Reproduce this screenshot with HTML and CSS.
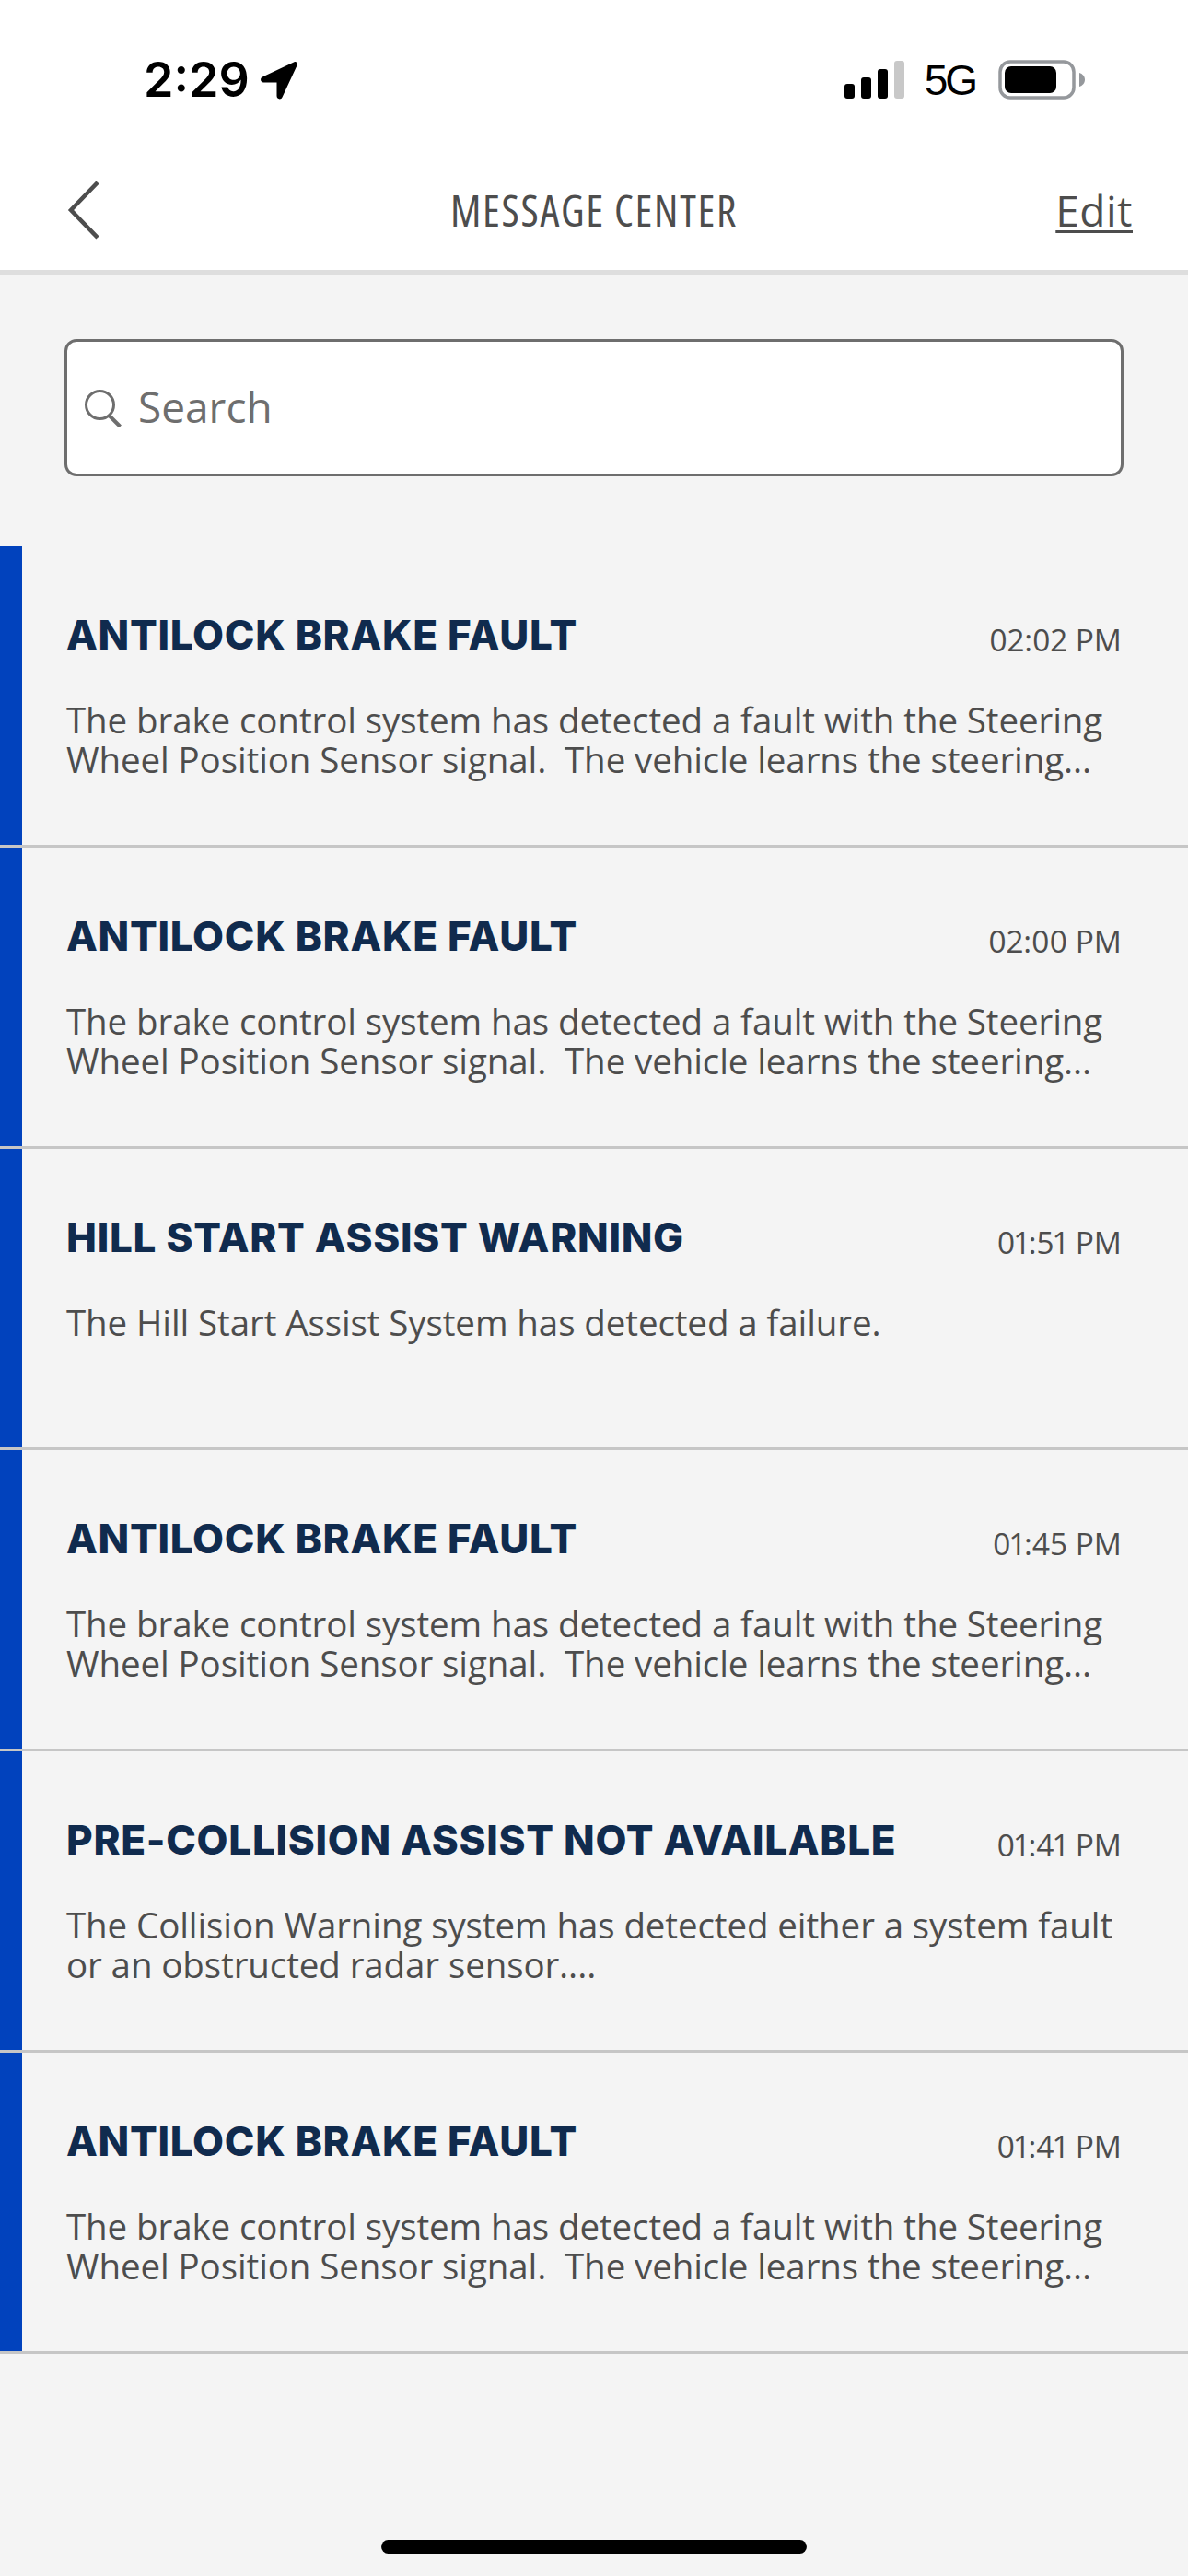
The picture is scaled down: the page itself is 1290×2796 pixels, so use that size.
FILE: index.html
```html
<!DOCTYPE html>
<html lang="en">
<head>
<meta charset="utf-8">
<title>Message Center</title>
<link rel="stylesheet" href="styles.css">
</head>
<body>
<header class="top">
  <div class="status">
    <div class="status-left">
      <span class="clock">2:29</span>
      <svg class="loc" viewBox="0 0 42 42" width="42" height="42"><path d="M37.500 1.200 3 17.500c-3.200 1.600-2.200 6 1.300 6H18.500v14.600c0 3.700 4.800 4.600 6.100 1.100L40.800 4.600c.7-2.300-1.300-4.300-3.300-3.400Z" fill="#000"/></svg>
    </div>
    <div class="status-right">
      <svg class="bars" viewBox="0 0 65 41" width="65" height="41">
        <rect x="0" y="25" width="11" height="16" rx="3" fill="#000"/>
        <rect x="18" y="18" width="11" height="23" rx="3" fill="#000"/>
        <rect x="36" y="9" width="11" height="32" rx="3" fill="#000"/>
        <rect x="54" y="0" width="11" height="41" rx="3" fill="#c8c8c8"/>
      </svg>
      <span class="net">5G</span>
      <svg class="batt" viewBox="0 0 94 43" width="94" height="43">
        <rect x="2" y="2" width="80" height="39" rx="11" fill="none" stroke="#95989c" stroke-width="3.500"/>
        <rect x="7" y="7" width="56" height="29" rx="7" fill="#000"/>
        <path d="M88 14c3.500 1 6 4 6 7.500s-2.500 6.500-6 7.500Z" fill="#95989c"/>
      </svg>
    </div>
  </div>
  <div class="nav">
    <svg class="back" viewBox="0 0 36 64" width="36" height="64"><path d="M33 2 4 32l29 30" fill="none" stroke="#4d4d4d" stroke-width="4.500"/></svg>
    <h1 class="nav-title">MESSAGE CENTER</h1>
    <a class="edit">Edit</a>
  </div>
</header>
<main class="content">
  <div class="search">
    <svg class="search-icon" viewBox="0 0 40 40" width="40" height="40"><circle cx="16.500" cy="16.500" r="15" fill="none" stroke="#6e6e6e" stroke-width="3"/><path d="M26.500 28 38.500 40" fill="none" stroke="#6e6e6e" stroke-width="4"/></svg>
    <span class="search-text">Search</span>
  </div>
  <ul class="list">
    <li class="row">
      <span class="row-accent"></span>
      <div class="row-main">
        <div class="row-head"><h2 class="row-title">ANTILOCK BRAKE FAULT</h2><time class="row-time">02:02 PM</time></div>
        <p class="row-body">The brake control system has detected a fault with the Steering<br>Wheel Position Sensor signal.&nbsp; The vehicle learns the steering...</p>
      </div>
    </li>
    <li class="row">
      <span class="row-accent"></span>
      <div class="row-main">
        <div class="row-head"><h2 class="row-title">ANTILOCK BRAKE FAULT</h2><time class="row-time">02:00 PM</time></div>
        <p class="row-body">The brake control system has detected a fault with the Steering<br>Wheel Position Sensor signal.&nbsp; The vehicle learns the steering...</p>
      </div>
    </li>
    <li class="row">
      <span class="row-accent"></span>
      <div class="row-main">
        <div class="row-head"><h2 class="row-title">HILL START ASSIST WARNING</h2><time class="row-time">01:51 PM</time></div>
        <p class="row-body">The Hill Start Assist System has detected a failure.</p>
      </div>
    </li>
    <li class="row">
      <span class="row-accent"></span>
      <div class="row-main">
        <div class="row-head"><h2 class="row-title">ANTILOCK BRAKE FAULT</h2><time class="row-time">01:45 PM</time></div>
        <p class="row-body">The brake control system has detected a fault with the Steering<br>Wheel Position Sensor signal.&nbsp; The vehicle learns the steering...</p>
      </div>
    </li>
    <li class="row">
      <span class="row-accent"></span>
      <div class="row-main">
        <div class="row-head"><h2 class="row-title">PRE-COLLISION ASSIST NOT AVAILABLE</h2><time class="row-time">01:41 PM</time></div>
        <p class="row-body">The Collision Warning system has detected either a system fault<br>or an obstructed radar sensor....</p>
      </div>
    </li>
    <li class="row">
      <span class="row-accent"></span>
      <div class="row-main">
        <div class="row-head"><h2 class="row-title">ANTILOCK BRAKE FAULT</h2><time class="row-time">01:41 PM</time></div>
        <p class="row-body">The brake control system has detected a fault with the Steering<br>Wheel Position Sensor signal.&nbsp; The vehicle learns the steering...</p>
      </div>
    </li>
  </ul>
</main>
<div class="home-bar"></div>
</body>
</html>
```
FILE: styles.css
```css
* { box-sizing: border-box; margin: 0; padding: 0; }
html, body { width: 1290px; height: 2796px; overflow: hidden; }
body { background: #f4f4f4; font-family: "Open Sans", "Noto Sans", sans-serif; color: #4d4d4d; position: relative; }

.top { height: 293px; background: #fff; box-shadow: 0 6px 0 #dedede; position: relative; display: flex; flex-direction: column; }
.status { height: 172px; padding: 65px 112px 0 156px; display: flex; justify-content: space-between; align-items: flex-start; }
.status-left { display: flex; align-items: center; gap: 11px; }
.clock { font-family: Inter, "Liberation Sans", sans-serif; font-weight: 600; font-size: 52px; line-height: 44px; color: #000; }
.status-right { display: flex; align-items: center; gap: 22px; }
.net { font-family: "Liberation Sans", sans-serif; font-size: 46px; line-height: 42px; letter-spacing: -3px; margin-right: 3px; color: #000; }

.nav { flex: 1; padding: 24px 60px 0 73px; display: flex; align-items: flex-start; justify-content: space-between; position: relative; }
.back { display: block; }
.nav-title { position: absolute; left: 0; right: 0; top: 31px; text-align: center; font-weight: 400; font-size: 47px; line-height: 50px; color: #4d4d4d; font-stretch: 85%; letter-spacing: 1.700px; }
.edit { font-size: 46px; line-height: 50px; margin-top: 7px; letter-spacing: .5px; text-decoration: underline; text-decoration-thickness: 3px; text-underline-offset: 4px; color: #4d4d4d; }

.content { padding-top: 75px; }
.search { height: 149px; margin: 0 70px; background: #fff; border: 3px solid #6e6e6e; border-radius: 13px; display: flex; align-items: center; padding-left: 19px; gap: 18px; }
.search-text { font-size: 46px; line-height: 60px; margin-top: -3px; color: #6e6e6e; }

.list { list-style: none; margin-top: 76px; }
.row { height: 327px; border-bottom: 3px solid #c6c6c6; display: flex; }
.row-accent { width: 24px; flex: none; background: #0142bd; }
.row-main { flex: 1; padding: 71px 72px 0 48px; }
.row-head { display: flex; justify-content: space-between; align-items: flex-start; height: 96px; }
.row-title { font-family: Inter, "Open Sans", sans-serif; font-weight: 800; font-size: 44px; line-height: 50px; letter-spacing: .7px; color: #102b4e; white-space: nowrap; }
.row-time { font-size: 33.500px; line-height: 40px; margin-top: 10px; font-variant-numeric: proportional-nums; color: #4d4d4d; }
.row-body { font-size: 38.500px; line-height: 43px; letter-spacing: -.1px; color: #4d4d4d; white-space: nowrap; }

.home-bar { position: absolute; left: 414px; top: 2757px; width: 462px; height: 15px; border-radius: 8px; background: #000; }
```
